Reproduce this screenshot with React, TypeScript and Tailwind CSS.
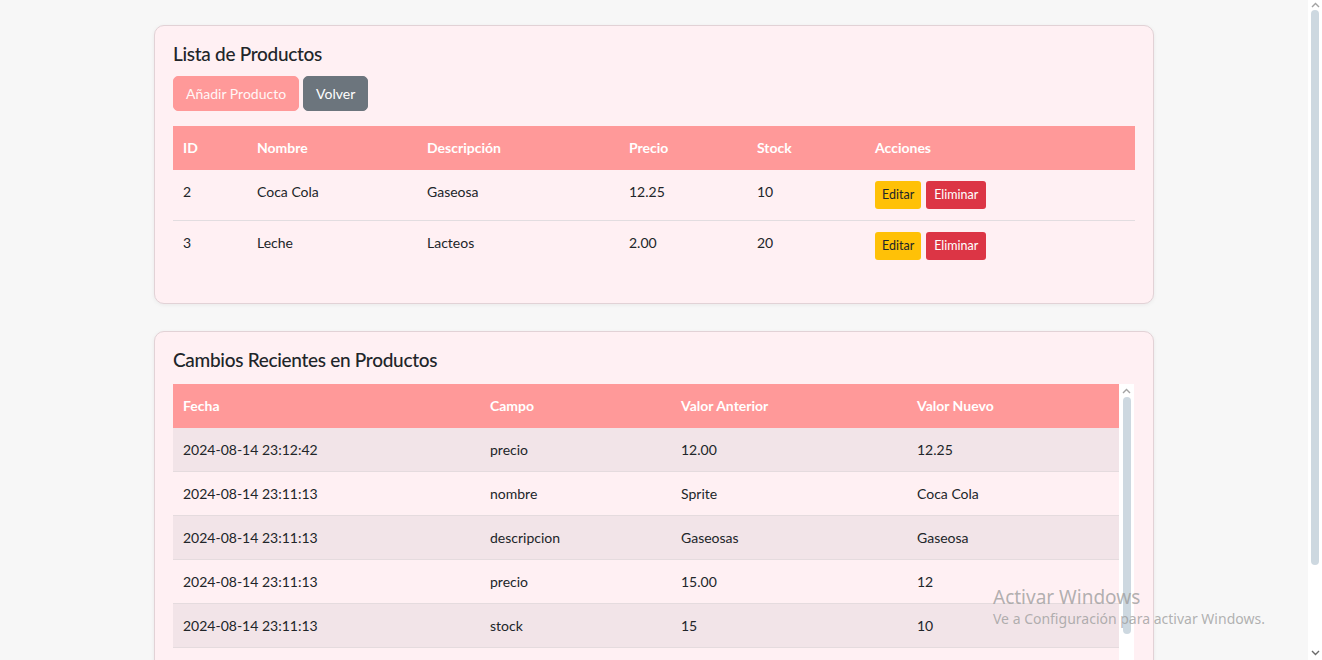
import React from "react";

const font = { fontFamily: "Lato, 'Noto Sans', sans-serif" };

const productos = [
  { id: 2, nombre: "Coca Cola", desc: "Gaseosa", precio: "12.25", stock: "10" },
  { id: 3, nombre: "Leche", desc: "Lacteos", precio: "2.00", stock: "20" },
];

const cambios = [
  ["2024-08-14 23:12:42", "precio", "12.00", "12.25"],
  ["2024-08-14 23:11:13", "nombre", "Sprite", "Coca Cola"],
  ["2024-08-14 23:11:13", "descripcion", "Gaseosas", "Gaseosa"],
  ["2024-08-14 23:11:13", "precio", "15.00", "12"],
  ["2024-08-14 23:11:13", "stock", "15", "10"],
  ["\u00a0", "\u00a0", "\u00a0", "\u00a0"],
];

export default function App() {
  return (
    <div
      className="relative flex h-[660px] w-[1322px] overflow-hidden bg-[#f7f7f7] text-[#212529]"
      style={font}
    >
      <div className="flex-1">
        <div className="mx-auto w-[1000px] pt-[25px]">
          {/* Card 1 */}
          <div className="rounded-[10px] border border-[#e2d2d6] bg-[#fff0f3] px-[18px] pt-4 pb-4 shadow-[0_1px_4px_rgba(0,0,0,0.06)]">
            <h4 className="mb-[10px] text-[19px] leading-[24px] font-medium tracking-[-0.3px] text-[#212529]">
              Lista de Productos
            </h4>
            <div className="mb-[15px] flex gap-[4px]">
              <button className="rounded-[5px] border border-[#ff9999] bg-[#ff9999] px-3 py-[6px] text-[14px] leading-[21px] text-[#fff6f6]">
                Añadir Producto
              </button>
              <button className="rounded-[5px] border border-[#6c757d] bg-[#6c757d] px-3 py-[6px] text-[14px] leading-[21px] text-white">
                Volver
              </button>
            </div>
            <table className="mb-4 w-full table-fixed border-collapse text-[14px] leading-[21px]">
              <colgroup>
                <col className="w-[74px]" />
                <col className="w-[170px]" />
                <col className="w-[202px]" />
                <col className="w-[128px]" />
                <col className="w-[118px]" />
                <col />
              </colgroup>
              <thead>
                <tr className="bg-[#ff9999] text-left font-bold text-white">
                  <th className="px-[10px] pt-[11px] pb-[12px]">ID</th>
                  <th className="px-[10px] pt-[11px] pb-[12px]">Nombre</th>
                  <th className="px-[10px] pt-[11px] pb-[12px]">Descripción</th>
                  <th className="px-[10px] pt-[11px] pb-[12px]">Precio</th>
                  <th className="px-[10px] pt-[11px] pb-[12px]">Stock</th>
                  <th className="px-[10px] pt-[11px] pb-[12px]">Acciones</th>
                </tr>
              </thead>
              <tbody>
                {productos.map((p, i) => (
                  <tr
                    key={p.id}
                    className={i < productos.length - 1 ? "border-b border-[#e2dde0]" : ""}
                  >
                    <td className="px-[10px] py-[11px] align-top">{p.id}</td>
                    <td className="px-[10px] py-[11px] align-top">{p.nombre}</td>
                    <td className="px-[10px] py-[11px] align-top">{p.desc}</td>
                    <td className="px-[10px] py-[11px] align-top">{p.precio}</td>
                    <td className="px-[10px] py-[11px] align-top">{p.stock}</td>
                    <td className="px-[10px] py-[11px] align-top">
                      <div className="flex gap-[5px]">
                        <button className="h-[28px] rounded-[3px] bg-[#ffc107] px-[7px] text-[12.5px] leading-[18px] text-[#212529]">
                          Editar
                        </button>
                        <button className="h-[28px] rounded-[3px] bg-[#dc3545] px-[8px] text-[12.5px] leading-[18px] text-white">
                          Eliminar
                        </button>
                      </div>
                    </td>
                  </tr>
                ))}
              </tbody>
            </table>
          </div>

          {/* Card 2 */}
          <div className="mt-[27px] rounded-[10px] border border-[#e2d2d6] bg-[#fff0f3] px-[18px] pt-4 pb-4 shadow-[0_1px_4px_rgba(0,0,0,0.06)]">
            <h4 className="mb-3 text-[19px] leading-[24px] font-medium tracking-[-0.3px] text-[#212529]">
              Cambios Recientes en Productos
            </h4>
            <div className="flex h-[320px]">
              <table className="w-[946px] table-fixed self-start border-collapse text-[14px] leading-[21px]">
                <colgroup>
                  <col className="w-[307px]" />
                  <col className="w-[191px]" />
                  <col className="w-[236px]" />
                  <col />
                </colgroup>
                <thead>
                  <tr className="bg-[#ff9999] text-left font-bold text-white">
                    <th className="px-[10px] pt-[11px] pb-[12px]">Fecha</th>
                    <th className="px-[10px] pt-[11px] pb-[12px]">Campo</th>
                    <th className="px-[10px] pt-[11px] pb-[12px]">Valor Anterior</th>
                    <th className="px-[10px] pt-[11px] pb-[12px]">Valor Nuevo</th>
                  </tr>
                </thead>
                <tbody>
                  {cambios.map((c, i) => (
                    <tr
                      key={i}
                      className={`border-b border-[#e5dbde] ${i % 2 === 0 ? "bg-[#f2e4e8]" : "bg-[#fff0f3]"}`}
                    >
                      {c.map((v, j) => (
                        <td key={j} className="px-[10px] py-[11px]">
                          {v}
                        </td>
                      ))}
                    </tr>
                  ))}
                </tbody>
              </table>
              {/* inner scrollbar */}
              <div className="flex w-[15px] flex-col items-center bg-white">
                <svg width="9" height="6" viewBox="0 0 9 6" className="mt-[4px]">
                  <path d="M1 5 L4.5 1.5 L8 5" fill="none" stroke="#a3a3a3" strokeWidth="1.4" />
                </svg>
                <div className="mt-[3px] h-[237px] w-[8px] rounded-full bg-[#cdd8e0]" />
              </div>
            </div>
          </div>
        </div>
      </div>

      {/* page scrollbar */}
      <div className="flex w-[14px] flex-col items-center bg-white">
        <svg width="9" height="6" viewBox="0 0 9 6" className="mt-[2px]">
          <path d="M1 5 L4.5 1.5 L8 5" fill="none" stroke="#a3a3a3" strokeWidth="1.4" />
        </svg>
        <div className="mt-[2px] h-[555px] w-[8px] rounded-full bg-[#cdd8e0]" />
        <div className="flex-1" />
        <svg width="9" height="6" viewBox="0 0 9 6" className="mb-[4px]">
          <path d="M1 1 L4.5 4.5 L8 1" fill="none" stroke="#6b6b6b" strokeWidth="1.4" />
        </svg>
      </div>

      {/* Windows activation watermark */}
      <div
        className="pointer-events-none absolute top-[585px] left-[993px] text-[#9e9e9e]/80"
        style={{ fontFamily: "'Noto Sans', 'Open Sans', sans-serif" }}
      >
        <div className="text-[19px] leading-[24px]">Activar Windows</div>
        <div className="text-[14px] leading-[20px]">Ve a Configuración para activar Windows.</div>
      </div>
    </div>
  );
}
